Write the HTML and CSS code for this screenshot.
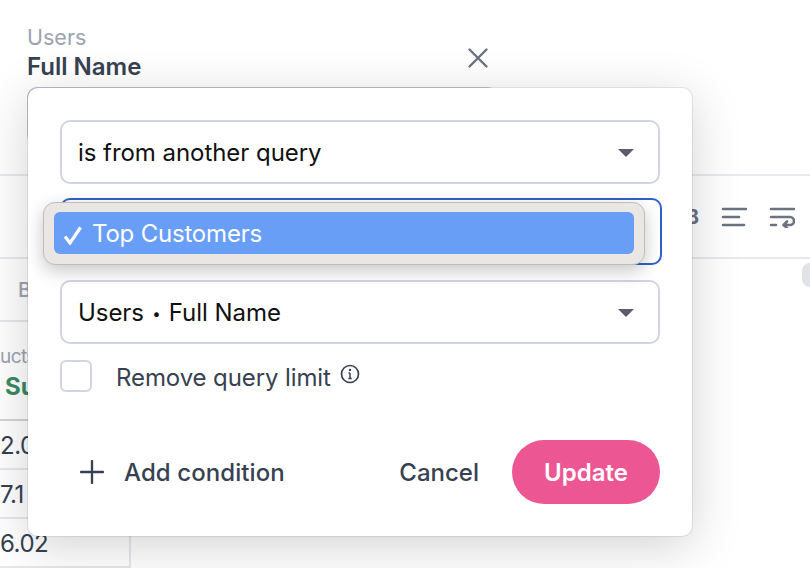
FILE: index.html
```html
<!DOCTYPE html>
<html lang="en">
<head>
<meta charset="utf-8">
<title>Filter</title>
<link rel="stylesheet" href="styles.css">
</head>
<body>
<div class="page">
  <header class="head">
    <div class="head-row">
      <div class="titles">
        <div class="crumb">Users</div>
        <div class="title">Full Name</div>
      </div>
      <svg class="close" width="24" height="24" viewBox="0 0 24 24"><path d="M3.500 3.500 20.500 20.500M20.500 3.500 3.500 20.500" fill="none" stroke="#6b7280" stroke-width="2.400" stroke-linecap="round"/></svg>
    </div>
    <div class="field"></div>
  </header>
  <div class="toolbar">
    <span class="tool-b">B</span>
    <svg class="tool" width="26" height="22" viewBox="0 0 26 22"><path d="M2 3H25M2 11H18M2 19H23" fill="none" stroke="#6b7280" stroke-width="2.600" stroke-linecap="round"/></svg>
    <svg class="tool" width="26" height="22" viewBox="0 0 26 22"><path d="M2 3H25M2 11H21a3.500 3.500 0 0 1 0 8H15M18 15.500 14.500 19 18 22M2 19H7" fill="none" stroke="#6b7280" stroke-width="2.600" stroke-linecap="round" stroke-linejoin="round"/></svg>
  </div>
  <div class="content">
    <div class="table">
      <div class="tabs">B</div>
      <div class="col-head">
        <div class="col-sub">ucts</div>
        <div class="col-name">Su</div>
      </div>
      <div class="cell">2.0</div>
      <div class="cell">7.1</div>
      <div class="cell">6.02</div>
    </div>
    <div class="scroll-thumb"></div>
  </div>
</div>

<section class="dialog">
  <div class="select"><span>is from another query</span><i class="caret"></i></div>
  <div class="select select-focus"><span></span></div>
  <div class="select"><span>Users <span class="dot">•</span> Full Name</span><i class="caret"></i></div>
  <label class="limit">
    <span class="checkbox"></span>
    <span class="limit-text">Remove query limit</span>
    <svg class="info" width="20" height="20" viewBox="0 0 20 20"><circle cx="10" cy="10" r="8.500" fill="none" stroke="#374151" stroke-width="1.700"/><path d="M10 9v5.500M8.300 14.500h3.400M8.500 9H10" fill="none" stroke="#374151" stroke-width="1.500"/><circle cx="10" cy="6" r="1.200" fill="#374151"/></svg>
  </label>
  <footer class="actions">
    <button class="add" type="button">
      <svg width="24" height="24" viewBox="0 0 24 24"><path d="M12 1V23M1 12H23" fill="none" stroke="#374151" stroke-width="2.300" stroke-linecap="round"/></svg>
      <span>Add condition</span>
    </button>
    <button class="cancel" type="button">Cancel</button>
    <button class="update" type="button">Update</button>
  </footer>
</section>

<div class="popup">
  <div class="option">
    <svg class="check" width="20" height="20" viewBox="0 0 20 20"><path d="M2 11.500 7 18 17.500 2.500" fill="none" stroke="#fff" stroke-width="3.200"/></svg>
    <span>Top Customers</span>
  </div>
</div>
</body>
</html>
```
FILE: styles.css
```css
* { box-sizing: border-box; }
html, body { margin: 0; height: 100%; }
body {
  width: 810px;
  height: 568px;
  overflow: hidden;
  position: relative;
  background: #fff;
  font-family: Inter, "Liberation Sans", sans-serif;
  color: #374151;
}
.page { display: flex; flex-direction: column; height: 568px; }
.head { height: 175px; padding: 25px 0 0 27px; }
.head-row { display: flex; width: 463px; justify-content: space-between; align-items: flex-start; }
.crumb { font-size: 21.5px; line-height: 25px; color: #9ca3af; }
.title { font-size: 24px; line-height: 32px; margin-top: 1px; font-weight: 600; color: #374151; }
.close { margin-top: 21px; }
.field { width: 471px; height: 58px; border: 2px solid #c7ccd8; border-radius: 10px; margin-top: 4px; }
.toolbar {
  height: 85px;
  border-top: 2px solid #e8e9ef;
  border-bottom: 2px solid #e8e9ef;
  display: flex;
  align-items: center;
  justify-content: flex-end;
  gap: 22px;
  padding: 0 15px 0 0;
}
.tool-b { font-size: 20px; font-weight: 700; color: #6b7280; }
.tool { margin-top: 1px; }
.content { flex: 1; display: flex; justify-content: space-between; align-items: flex-start; }
.table { width: 131px; height: 309px; border-right: 2px solid #e5e7eb; color: #374151; }
.tabs { height: 63px; border-bottom: 2px solid #e5e7eb; padding: 17px 0 0 18px; font-size: 20px; line-height: 28px; color: #9ca3af; font-weight: 500; }
.col-head { height: 99px; border-bottom: 2px solid #d1d5db; padding: 20px 0 0 0; }
.col-sub { font-size: 19px; line-height: 30px; letter-spacing: -.6px; color: #9ca3af; }
.col-name { font-size: 24px; line-height: 30px; font-weight: 700; color: #3a8a5f; padding-left: 5px; }
.cell { height: 49px; border-bottom: 2px solid #e5e7eb; font-size: 24px; line-height: 50px; letter-spacing: -.5px; }
.scroll-thumb { width: 8px; height: 24px; margin-top: 4px; background: #e2e3e7; border-radius: 8px 0 0 8px; }

.dialog {
  position: absolute;
  left: 28px;
  top: 88px;
  width: 664px;
  height: 448px;
  background: #fff;
  border-radius: 10px;
  box-shadow: 0 0 0 1px rgba(0,0,0,.08), 0 10px 50px rgba(0,0,0,.18);
  padding: 32px;
  display: flex;
  flex-direction: column;
}
.select {
  width: 600px;
  height: 64px;
  flex: none;
  border: 2px solid #d1d5e2;
  border-radius: 10px;
  display: flex;
  align-items: center;
  justify-content: space-between;
  padding: 0 24px 0 16px;
  font-size: 24px;
  letter-spacing: -.05px;
  color: #111;
}
.dot { font-size: 15px; vertical-align: 2px; margin: 0 1.500px; }
.select-focus { width: 602px; height: 67px; margin: 14px 0 15px; border-color: #2f62c8; }
.caret { width: 0; height: 0; border-left: 8px solid transparent; border-right: 8px solid transparent; border-top: 8px solid #5a5e6b; margin-top: 1px; }
.limit { display: flex; align-items: center; margin-top: 16px; height: 32px; }
.checkbox { width: 32px; height: 32px; border: 2px solid #d1d5e2; border-radius: 6px; }
.limit-text { margin: 2px 0 0 24px; font-size: 24px; letter-spacing: -.1px; color: #374151; }
.info { margin: -5px 0 0 9px; }
.actions { display: flex; align-items: center; margin-top: 48px; height: 64px; }
.actions button { border: 0; background: none; padding: 0; font: inherit; font-size: 24px; font-weight: 500; color: #374151; }
.add { display: flex; align-items: center; gap: 20px; margin-left: 20px; margin-right: auto; letter-spacing: .08px; }
.cancel { margin-right: 33px; }
.actions .update { width: 148px; height: 64px; border-radius: 32px; background: #ec5793; color: #fff; font-weight: 600; }

.popup {
  position: absolute;
  left: 43px;
  top: 202px;
  width: 602px;
  height: 63px;
  padding: 9px 10px;
  background: #e9e6e3;
  border: 1px solid #bfbdba;
  border-radius: 12px;
  box-shadow: 0 6px 18px rgba(0,0,0,.22);
}
.option {
  height: 42px;
  background: #699ef7;
  border-radius: 6px;
  display: flex;
  align-items: center;
  gap: 9px;
  padding-left: 9px;
  color: #fff;
  font-size: 24px;
  letter-spacing: -.2px;
}
.check { margin-top: 3px; }
```
